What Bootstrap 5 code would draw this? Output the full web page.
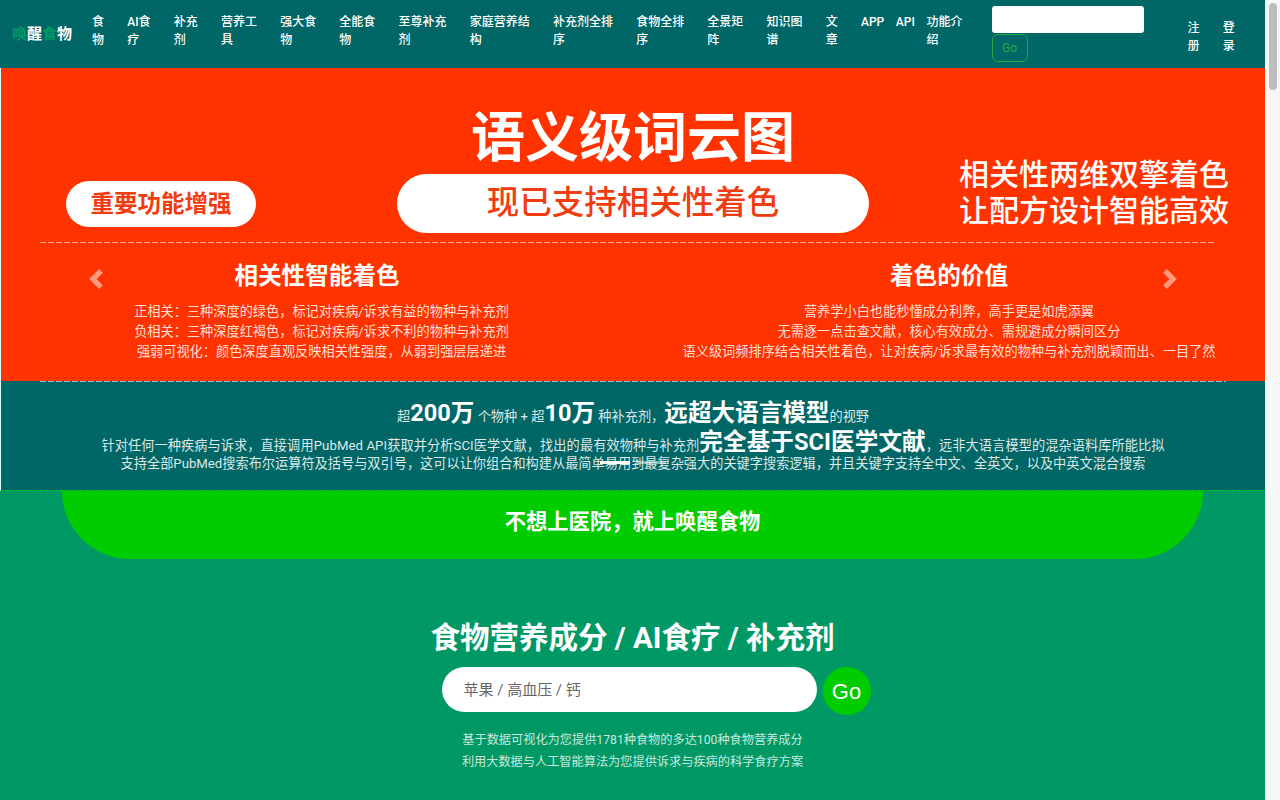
<!DOCTYPE html>
<html lang="zh">

<head>
    <meta charset="UTF-8" />
    <meta name="viewport" content="width=device-width, initial-scale=1.0" />
    <title>唤醒食物</title>
    <link href="https://cdn.jsdelivr.net/npm/bootstrap@5.3.0/dist/css/bootstrap.min.css" rel="stylesheet" />
    <style>
        body {
            background-color: #009966;
            font-family: Roboto, "Noto Sans CJK SC", sans-serif;
            padding-right: 15px;
        }

        .scroll-rail {
            position: fixed;
            top: 0;
            right: 0;
            bottom: 0;
            width: 15px;
            background: #f8f8f8;
            padding: 3px 3px 0 4px;
        }

        .scroll-thumb {
            height: 87px;
            border-radius: 4px;
            background: #bdbdbd;
        }

        .top-bar {
            background-color: #006666;
            height: 68px;
            padding: 0;
        }

        .brand-name {
            font-size: 15px;
            font-weight: 700;
            color: #fff;
            width: 80.4px;
            padding-left: 12px;
            white-space: nowrap;
        }

        .brand-name span {
            color: #009966;
        }

        .top-link {
            color: #fff;
            font-size: 12px;
            font-weight: 500;
            line-height: 18px;
            padding: 0 11.6px;
        }

        .top-main {
            margin-bottom: 6px;
        }

        .top-search {
            width: 152px;
            margin-left: 17.5px;
        }

        .top-search input {
            height: 27px;
            border: 0;
            border-radius: 3px;
            padding: 0 6px;
            margin-bottom: 1px;
        }

        .top-search .btn {
            font-size: 12px;
            padding: 0;
            width: 36px;
            height: 28px;
            color: #28a745;
            border-color: #28a745;
        }

        .top-right {
            margin-left: 32.4px;
            margin-top: 6px;
        }

        .banner {
            border-left: 1px solid #dff;
            border-bottom: 1px dashed #00cc00;
        }

        .banner-hot {
            background-color: #ff3300;
            color: #fff;
            height: 313px;
            padding-top: 36px;
        }

        .banner-title {
            font-size: 54px;
            font-weight: 700;
            line-height: 70px;
            text-align: center;
        }

        .banner-head {
            width: 396px;
            padding: 7px 0 0 65px;
        }

        .pill-small {
            display: block;
            width: 190px;
            height: 46px;
            border-radius: 23px;
            background: #fff;
            color: #f03c10;
            font-size: 23.5px;
            font-weight: 700;
            line-height: 46px;
            text-align: center;
        }

        .pill-big {
            width: 472px;
            height: 59px;
            border-radius: 30px;
            background: #fff;
            color: #f03c10;
            font-size: 32.5px;
            font-weight: 500;
            line-height: 59px;
            text-align: center;
        }

        .banner-slogan {
            font-size: 30px;
            font-weight: 500;
            line-height: 36px;
            margin: -17px 0 0 90px;
            white-space: nowrap;
        }

        .dash-line {
            height: 1px;
            margin: 9px 49px 0 39px;
            background: repeating-linear-gradient(90deg, rgba(255, 255, 255, .6) 0 6px, transparent 6px 8px);
        }

        .banner-col {
            text-align: center;
            font-size: 13.2px;
            line-height: 20px;
            color: rgba(255, 255, 255, .85);
        }

        .banner-col h3 {
            font-size: 23.6px;
            font-weight: 700;
            line-height: 32px;
            color: #fff;
            margin: 17px 0 10px;
        }

        .col-lines-left {
            padding-left: 9px;
        }

        .banner-teal {
            background-color: #006666;
            color: rgba(255, 255, 255, .88);
            height: 109px;
            font-size: 13.2px;
            text-align: center;
            line-height: 21px;
        }

        .banner-teal .dash-line {
            margin: 0 39px 19.5px;
        }

        .teal-first {
            line-height: 29px;
        }

        .teal-second {
            letter-spacing: .08px;
        }

        .teal-third {
            margin-top: -3px;
        }

        .banner-teal b {
            font-size: 23.6px;
            font-weight: 700;
            color: #fff;
            line-height: 1;
        }

        .nav-arrow {
            width: 20px;
            height: 20px;
        }

        .slogan-box {
            margin: 0 62px;
            height: 68px;
            background-color: #00cc00;
            border-radius: 0 0 68px 68px;
            color: #fff;
            font-size: 21.3px;
            font-weight: 700;
            line-height: 62px;
            text-align: center;
        }

        .search-section {
            padding-top: 59px;
            height: 242px;
            color: #fff;
            text-align: center;
        }

        .search-section h1 {
            font-size: 29.5px;
            font-weight: 700;
            line-height: 40px;
            margin-bottom: 9px;
        }

        .search-form {
            padding-left: 47px;
        }

        .search-form input {
            width: 375px;
            height: 45px;
            border: 0;
            border-radius: 23px;
            padding: 0 22px;
            font-size: 15px;
        }

        .search-form input::placeholder {
            color: #666;
        }

        .go-round {
            width: 48px;
            height: 48px;
            padding: 0;
            margin-left: 6px;
            border-radius: 50%;
            border: 0;
            background-color: #00cc00;
            color: #fff;
            font-family: "Liberation Sans", sans-serif;
            font-size: 22px;
        }

        .search-note {
            margin-top: 14px;
            font-size: 12.2px;
            line-height: 22px;
            color: rgba(255, 255, 255, .8);
        }
    </style>
</head>

<body>
    <nav class="navbar top-bar flex-nowrap justify-content-start">
        <a class="brand-name text-decoration-none" href="#"><span>唤</span>醒<span>食</span>物</a>
        <ul class="navbar-nav top-main flex-row align-items-center">
            <li class="nav-item"><a class="top-link d-block text-decoration-none" href="#">食<br>物</a></li>
            <li class="nav-item"><a class="top-link d-block text-decoration-none" href="#">AI食<br>疗</a></li>
            <li class="nav-item"><a class="top-link d-block text-decoration-none" href="#">补充<br>剂</a></li>
            <li class="nav-item"><a class="top-link d-block text-decoration-none" href="#">营养工<br>具</a></li>
            <li class="nav-item"><a class="top-link d-block text-decoration-none" href="#">强大食<br>物</a></li>
            <li class="nav-item"><a class="top-link d-block text-decoration-none" href="#">全能食<br>物</a></li>
            <li class="nav-item"><a class="top-link d-block text-decoration-none" href="#">至尊补充<br>剂</a></li>
            <li class="nav-item"><a class="top-link d-block text-decoration-none" href="#">家庭营养结<br>构</a></li>
            <li class="nav-item"><a class="top-link d-block text-decoration-none" href="#">补充剂全排<br>序</a></li>
            <li class="nav-item"><a class="top-link d-block text-decoration-none" href="#">食物全排<br>序</a></li>
            <li class="nav-item"><a class="top-link d-block text-decoration-none" href="#">全景矩<br>阵</a></li>
            <li class="nav-item"><a class="top-link d-block text-decoration-none" href="#">知识图<br>谱</a></li>
            <li class="nav-item"><a class="top-link d-block text-decoration-none" href="#">文<br>章</a></li>
            <li class="nav-item"><a class="top-link d-block text-decoration-none" href="#">APP<br>&nbsp;</a></li>
            <li class="nav-item"><a class="top-link d-block text-decoration-none px-0" href="#">API<br>&nbsp;</a></li>
            <li class="nav-item"><a class="top-link d-block text-decoration-none" href="#">功能介<br>绍</a></li>
        </ul>
        <form class="top-search">
            <input class="form-control" type="search" aria-label="Search" />
            <button class="btn btn-outline-success" type="button">Go</button>
        </form>
        <ul class="navbar-nav flex-row top-right">
            <li class="nav-item"><a class="top-link d-block text-decoration-none" href="#">注<br>册</a></li>
            <li class="nav-item"><a class="top-link d-block text-decoration-none" href="#">登<br>录</a></li>
        </ul>
    </nav>

    <div id="mainBanner" class="carousel slide banner">
        <div class="carousel-indicators">
            <button type="button" data-bs-target="#mainBanner" data-bs-slide-to="0" class="active" aria-label="Slide 1"></button>
            <button type="button" data-bs-target="#mainBanner" data-bs-slide-to="1" aria-label="Slide 2"></button>
        </div>
        <div class="carousel-inner">
            <div class="carousel-item active">
                <div class="banner-hot">
                    <div class="banner-title">语义级词云图</div>
                    <div class="d-flex align-items-start">
                        <div class="banner-head"><span class="pill-small">重要功能增强</span></div>
                        <div class="pill-big">现已支持相关性着色</div>
                        <div class="banner-slogan">相关性两维双擎着色<br>让配方设计智能高效</div>
                    </div>
                    <div class="dash-line"></div>
                    <div class="row g-0">
                        <div class="col-6 banner-col">
                            <h3>相关性智能着色</h3>
                            <div class="col-lines-left">
                                正相关：三种深度的绿色，标记对疾病/诉求有益的物种与补充剂<br>
                                负相关：三种深度红褐色，标记对疾病/诉求不利的物种与补充剂<br>
                                强弱可视化：颜色深度直观反映相关性强度，从弱到强层层递进
                            </div>
                        </div>
                        <div class="col-6 banner-col">
                            <h3>着色的价值</h3>
                            营养学小白也能秒懂成分利弊，高手更是如虎添翼<br>
                            无需逐一点击查文献，核心有效成分、需规避成分瞬间区分<br>
                            语义级词频排序结合相关性着色，让对疾病/诉求最有效的物种与补充剂脱颖而出、一目了然
                        </div>
                    </div>
                </div>
                <div class="banner-teal">
                    <div class="dash-line"></div>
                    <div class="teal-first">超<b>200万</b> 个物种 + 超<b>10万</b> 种补充剂，<b>远超大语言模型</b>的视野</div>
                    <div class="teal-second">针对任何一种疾病与诉求，直接调用PubMed API获取并分析SCI医学文献，找出的最有效物种与补充剂<b>完全基于SCI医学文献</b>，远非大语言模型的混杂语料库所能比拟</div>
                    <div class="teal-third">支持全部PubMed搜索布尔运算符及括号与双引号，这可以让你组合和构建从最简单易用到最复杂强大的关键字搜索逻辑，并且关键字支持全中文、全英文，以及中英文混合搜索</div>
                </div>
            </div>
        </div>
        <button class="carousel-control-prev" type="button" data-bs-target="#mainBanner" data-bs-slide="prev" aria-label="Previous">
            <svg class="nav-arrow" viewBox="0 0 8 8" fill="#fff" aria-hidden="true"><path d="M5.25 0l-4 4 4 4 1.5-1.5L4.25 4l2.5-2.5L5.25 0z" /></svg>
        </button>
        <button class="carousel-control-next" type="button" data-bs-target="#mainBanner" data-bs-slide="next" aria-label="Next">
            <svg class="nav-arrow" viewBox="0 0 8 8" fill="#fff" aria-hidden="true"><path d="M2.75 0l-1.5 1.5L3.75 4l-2.5 2.5L2.75 8l4-4-4-4z" /></svg>
        </button>
    </div>

    <div class="slogan-box">不想上医院，就上唤醒食物</div>

    <section class="search-section">
        <h1>食物营养成分 / AI食疗 / 补充剂</h1>
        <form class="search-form d-flex justify-content-center align-items-start">
            <input type="text" placeholder="苹果 / 高血压 / 钙" aria-label="搜索" />
            <button class="btn go-round" type="button">Go</button>
        </form>
        <div class="search-note">
            基于数据可视化为您提供1781种食物的多达100种食物营养成分<br>
            利用大数据与人工智能算法为您提供诉求与疾病的科学食疗方案
        </div>
    </section>

    <div class="scroll-rail"><div class="scroll-thumb"></div></div>

    <script src="https://cdn.jsdelivr.net/npm/bootstrap@5.3.0/dist/js/bootstrap.bundle.min.js"></script>
</body>

</html>
